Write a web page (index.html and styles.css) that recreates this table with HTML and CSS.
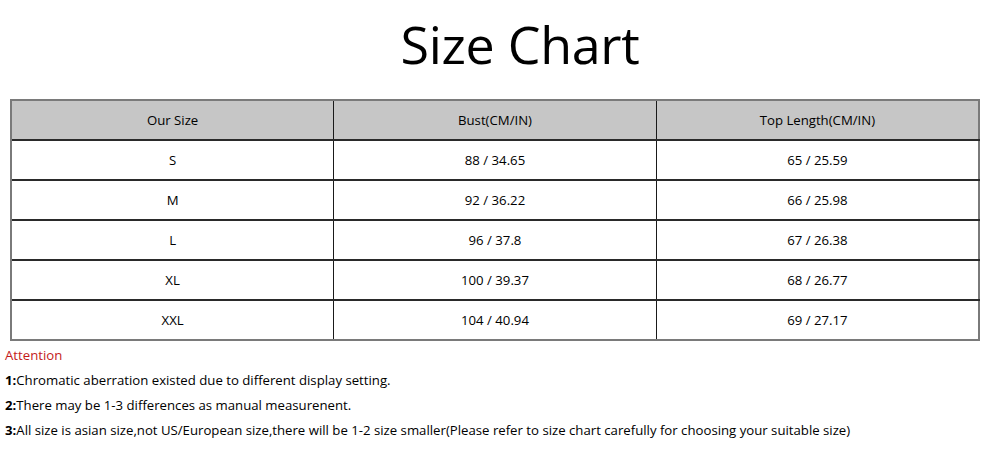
FILE: index.html
```html
<!DOCTYPE html>
<html>
<head>
<meta charset="utf-8">
<link rel="stylesheet" href="styles.css">
</head>
<body>
<h1 class="title">Size Chart</h1>
<table class="chart">
  <tr class="head"><td>Our Size</td><td>Bust(CM/IN)</td><td>Top Length(CM/IN)</td></tr>
  <tr><td>S</td><td>88 / 34.65</td><td>65 / 25.59</td></tr>
  <tr><td>M</td><td>92 / 36.22</td><td>66 / 25.98</td></tr>
  <tr><td>L</td><td>96 / 37.8</td><td>67 / 26.38</td></tr>
  <tr><td>XL</td><td>100 / 39.37</td><td>68 / 26.77</td></tr>
  <tr><td>XXL</td><td>104 / 40.94</td><td>69 / 27.17</td></tr>
</table>
<div class="notes">
  <p class="attn">Attention</p>
  <p><b>1:</b>Chromatic aberration existed due to different display setting.</p>
  <p><b>2:</b>There may be 1-3 differences as manual measurenent.</p>
  <p><b>3:</b>All size is asian size,not US/European size,there will be 1-2 size smaller(Please refer to size chart carefully for choosing your suitable size)</p>
</div>
</body>
</html>
```
FILE: styles.css
```css
html, body { margin: 0; padding: 0; background: #fff; }
body { font-family: "Open Sans", "Noto Sans", sans-serif; color: #000; width: 1000px; }
.title {
  margin: 0;
  height: 99px;
  line-height: 88px;
  padding-left: 40px;
  text-align: center;
  font-weight: 400;
  font-size: 52px;
  letter-spacing: -0.3px;
}
.chart {
  margin-left: 10px;
  width: 970px;
  border-collapse: collapse;
  border: 2px solid #7a7a7a;
  font-size: 13.2px;
}
.chart td {
  height: 38px;
  padding: 0;
  text-align: center;
  border-top: 2px solid #2a2a2a;
  border-left: 1px solid #1a1a1a;
  width: 33.33%;
}
.chart tr:first-child td { border-top: 2px solid #7a7a7a; }
.chart td:first-child { border-left: 2px solid #7a7a7a; }
.chart .head td { background: #c6c6c6; }
.notes { padding-left: 5px; font-size: 13.2px; }
.notes p { margin: 0; height: 25px; line-height: 25px; }
.notes .attn { color: #c41a1a; line-height: 28px; height: 27px; }
.notes b { font-weight: 700; }
```
